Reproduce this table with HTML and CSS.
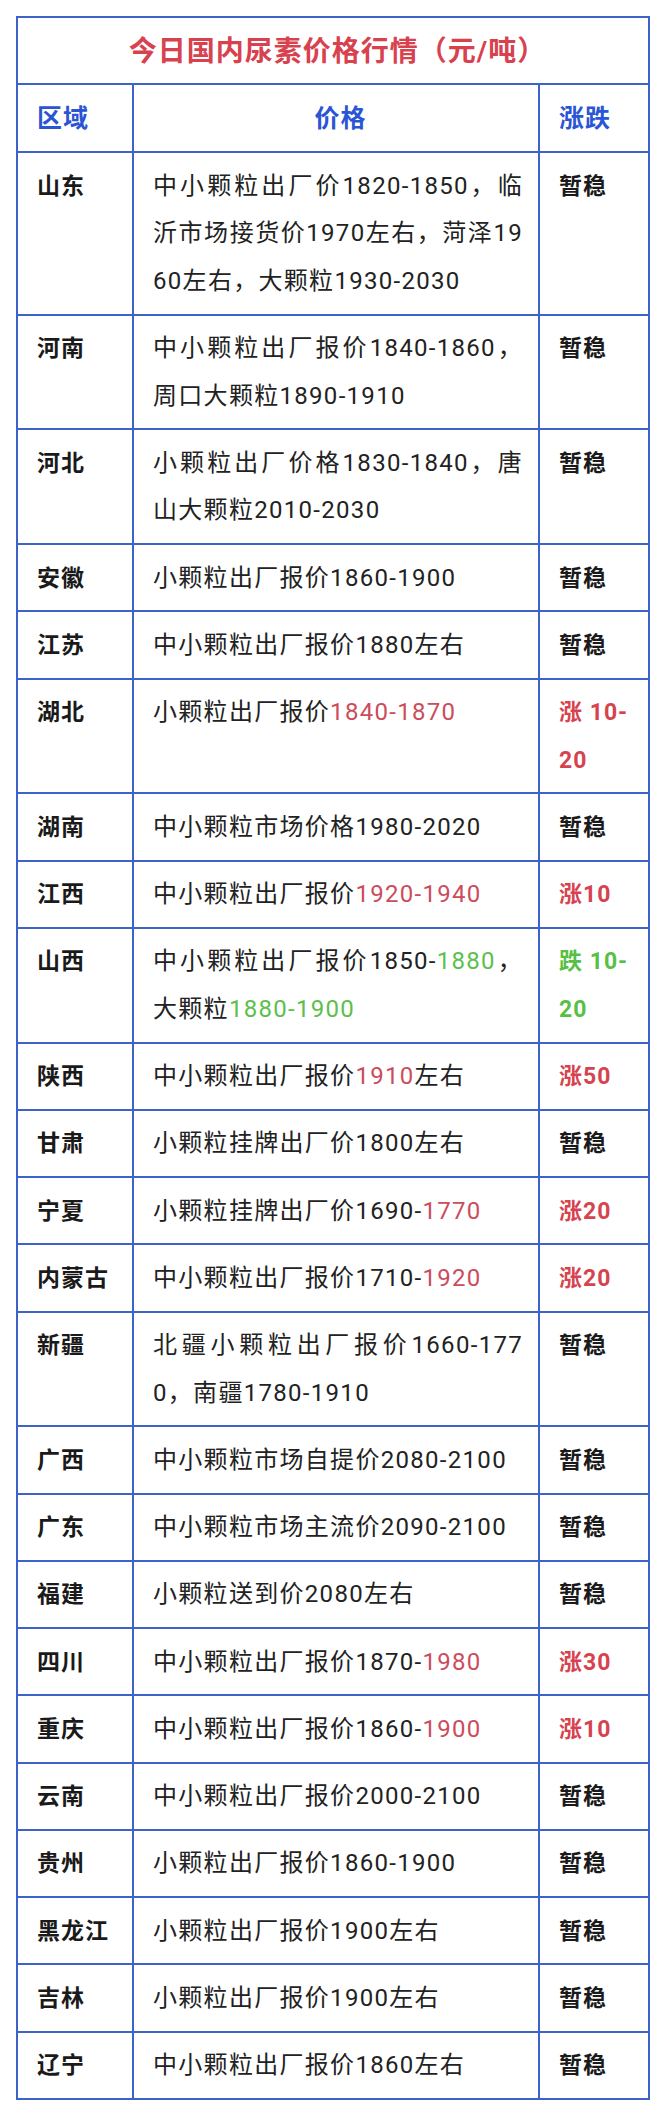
FILE: index.html
```html
<!DOCTYPE html>
<html lang="zh-CN">
<head>
<meta charset="utf-8">
<title>今日国内尿素价格行情</title>
<link rel="stylesheet" href="styles.css">
</head>
<body>
<div class="page">
<table class="price-table">
  <colgroup>
    <col class="c-region">
    <col class="c-price">
    <col class="c-change">
  </colgroup>
  <thead>
    <tr><th colspan="3" class="title">今日国内尿素价格行情（元/吨）</th></tr>
    <tr class="head">
      <th class="h-left">区域</th>
      <th class="h-center">价格</th>
      <th class="h-left">涨跌</th>
    </tr>
  </thead>
  <tbody>
    <tr><td class="region">山东</td><td class="price"><span class="ln">中小颗粒出厂价1820-1850，临</span><span class="ln">沂市场接货价1970左右，菏泽19</span>60左右，大颗粒1930-2030</td><td class="chg">暂稳</td></tr>
    <tr><td class="region">河南</td><td class="price"><span class="ln">中小颗粒出厂报价1840-1860，</span>周口大颗粒1890-1910</td><td class="chg">暂稳</td></tr>
    <tr><td class="region">河北</td><td class="price"><span class="ln">小颗粒出厂价格1830-1840，唐</span>山大颗粒2010-2030</td><td class="chg">暂稳</td></tr>
    <tr><td class="region">安徽</td><td class="price">小颗粒出厂报价1860-1900</td><td class="chg">暂稳</td></tr>
    <tr><td class="region">江苏</td><td class="price">中小颗粒出厂报价1880左右</td><td class="chg">暂稳</td></tr>
    <tr><td class="region">湖北</td><td class="price">小颗粒出厂报价<span class="up">1840-1870</span></td><td class="chg up-b">涨 10-20</td></tr>
    <tr><td class="region">湖南</td><td class="price">中小颗粒市场价格1980-2020</td><td class="chg">暂稳</td></tr>
    <tr><td class="region">江西</td><td class="price">中小颗粒出厂报价<span class="up">1920-1940</span></td><td class="chg up-b">涨10</td></tr>
    <tr><td class="region">山西</td><td class="price"><span class="ln">中小颗粒出厂报价1850-<span class="down">1880</span>，</span>大颗粒<span class="down">1880-1900</span></td><td class="chg down-b">跌 10-20</td></tr>
    <tr><td class="region">陕西</td><td class="price">中小颗粒出厂报价<span class="up">1910</span>左右</td><td class="chg up-b">涨50</td></tr>
    <tr><td class="region">甘肃</td><td class="price">小颗粒挂牌出厂价1800左右</td><td class="chg">暂稳</td></tr>
    <tr><td class="region">宁夏</td><td class="price">小颗粒挂牌出厂价1690-<span class="up">1770</span></td><td class="chg up-b">涨20</td></tr>
    <tr><td class="region">内蒙古</td><td class="price">中小颗粒出厂报价1710-<span class="up">1920</span></td><td class="chg up-b">涨20</td></tr>
    <tr><td class="region">新疆</td><td class="price"><span class="ln">北疆小颗粒出厂报价1660-177</span>0，南疆1780-1910</td><td class="chg">暂稳</td></tr>
    <tr><td class="region">广西</td><td class="price">中小颗粒市场自提价2080-2100</td><td class="chg">暂稳</td></tr>
    <tr><td class="region">广东</td><td class="price">中小颗粒市场主流价2090-2100</td><td class="chg">暂稳</td></tr>
    <tr><td class="region">福建</td><td class="price">小颗粒送到价2080左右</td><td class="chg">暂稳</td></tr>
    <tr><td class="region">四川</td><td class="price">中小颗粒出厂报价1870-<span class="up">1980</span></td><td class="chg up-b">涨30</td></tr>
    <tr><td class="region">重庆</td><td class="price">中小颗粒出厂报价1860-<span class="up">1900</span></td><td class="chg up-b">涨10</td></tr>
    <tr><td class="region">云南</td><td class="price">中小颗粒出厂报价2000-2100</td><td class="chg">暂稳</td></tr>
    <tr><td class="region">贵州</td><td class="price">小颗粒出厂报价1860-1900</td><td class="chg">暂稳</td></tr>
    <tr><td class="region">黑龙江</td><td class="price">小颗粒出厂报价1900左右</td><td class="chg">暂稳</td></tr>
    <tr><td class="region">吉林</td><td class="price">小颗粒出厂报价1900左右</td><td class="chg">暂稳</td></tr>
    <tr><td class="region">辽宁</td><td class="price">中小颗粒出厂报价1860左右</td><td class="chg">暂稳</td></tr>
  </tbody>
</table>
</div>
</body>
</html>
```

FILE: styles.css
```css
html, body {
  margin: 0;
  padding: 0;
  background: #ffffff;
}

body {
  font-family: Roboto, "Noto Sans CJK SC", "Noto Sans", sans-serif;
  color: #1f1f1f;
}

.page {
  padding: 16px 12px 18px 16px;
}

.price-table {
  width: 632px;
  table-layout: fixed;
  border-collapse: collapse;
  border: 2px solid #3d63c9;
}

.c-region { width: 116px; }
.c-price { width: 406px; }
.c-change { width: 110px; }

.price-table th,
.price-table td {
  border: 2px solid #3d63c9;
  vertical-align: top;
  padding: 9.5px 10px 8.25px 19px;
  line-height: 47.5px;
  letter-spacing: 1px;
}

.title {
  color: #d8414e;
  font-size: 28px;
  font-weight: 700;
  text-align: center;
  padding: 10px 0 7px;
  line-height: 48px;
}

.head th {
  color: #2a55d4;
  font-size: 25px;
  font-weight: 700;
  line-height: 48px;
  padding-top: 10px;
  padding-bottom: 8px;
}

.h-left { text-align: left; }
.h-center { text-align: center; }

.region {
  font-size: 23px;
  font-weight: 700;
  color: #1a1a1a;
}

.price-table .price {
  font-size: 24px;
  font-weight: 400;
  color: #222222;
  letter-spacing: 1.3px;
  padding-right: 15px;
}

.ln {
  display: block;
  white-space: nowrap;
  text-align: justify;
  text-align-last: justify;
}

.chg {
  font-size: 23px;
  font-weight: 700;
  color: #1a1a1a;
}

.up { color: #cc4c5c; }
.down { color: #5cbf4c; }
.up-b { color: #d6434f; }
.down-b { color: #58bf45; }
```
